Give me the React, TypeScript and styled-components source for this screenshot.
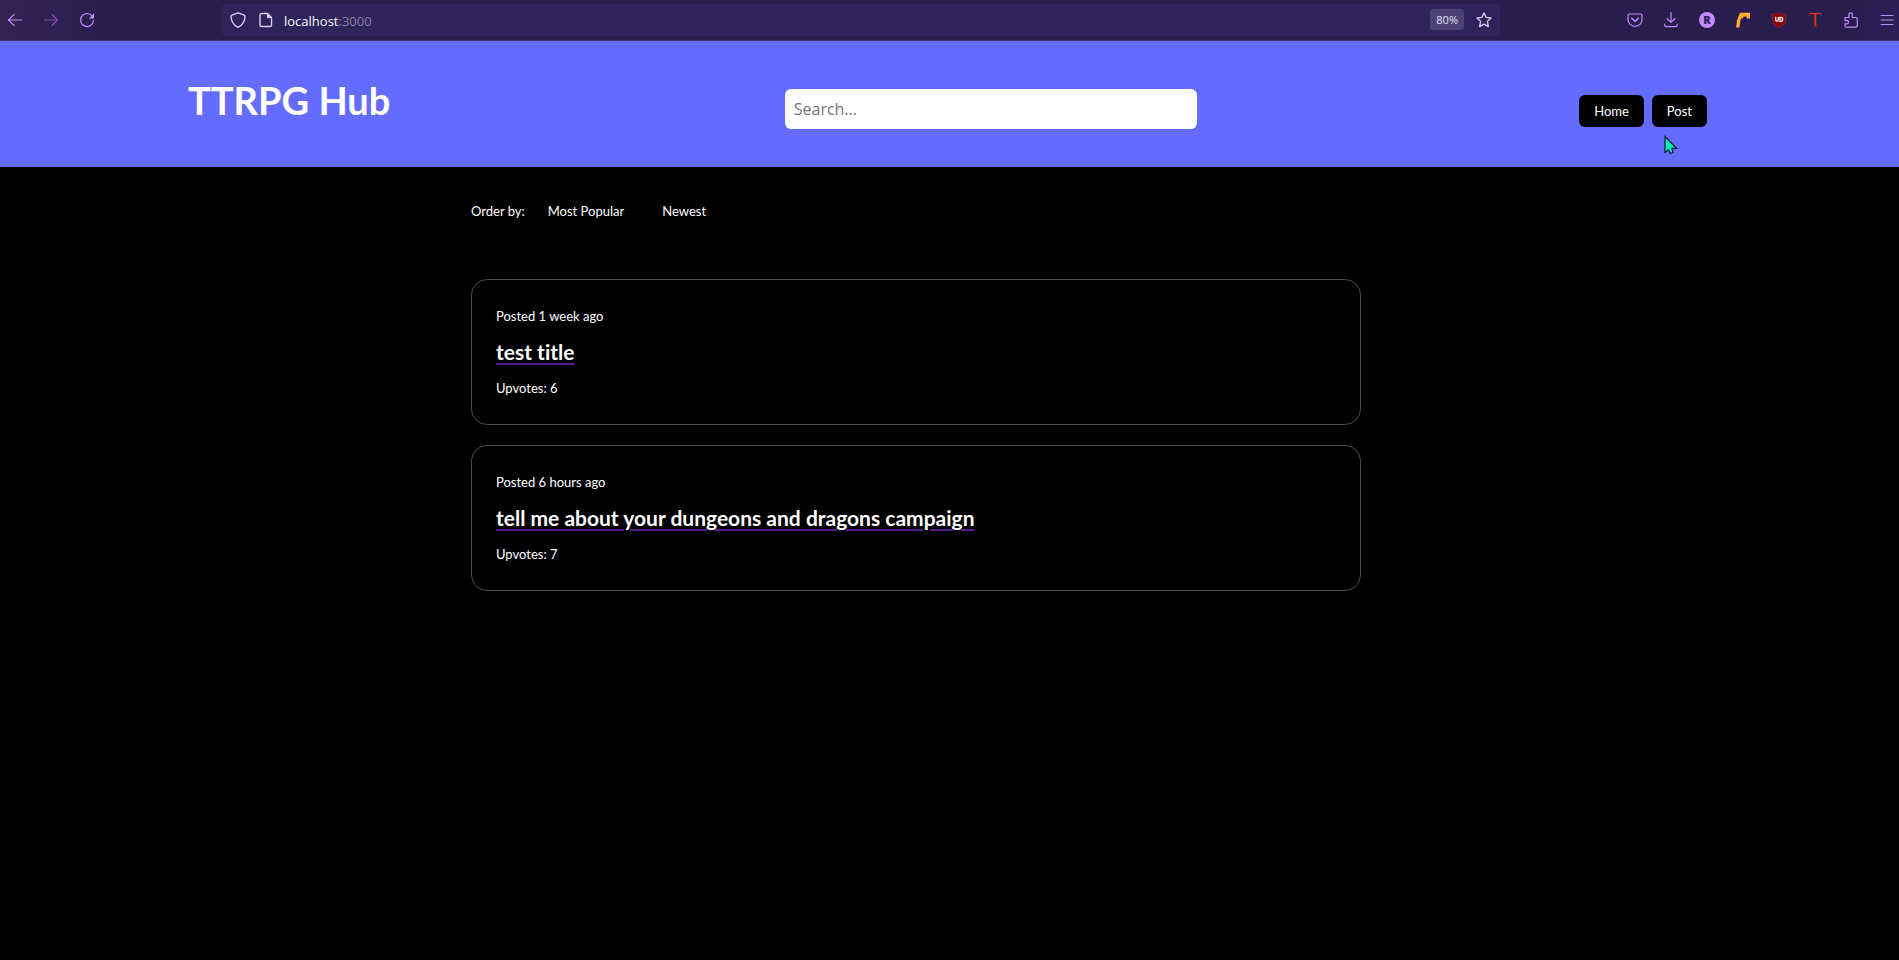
import React from 'react';
import styled, { createGlobalStyle } from 'styled-components';

const GlobalStyle = createGlobalStyle`
  *, *::before, *::after { box-sizing: border-box; }
  body {
    margin: 0;
    min-height: 100vh;
    background: #000;
    color: #fff;
    font-family: 'Century Gothic', Lato, sans-serif;
    font-size: 13px;
    line-height: 16px;
    font-variant-ligatures: none;
  }
  h1, h2, p { margin: 0; }
  button { font: inherit; border: 0; padding: 0; background: none; color: inherit; cursor: pointer; }
`;

/* ---------- browser bar ---------- */

const BrowserBar = styled.div`
  display: flex;
  align-items: center;
  height: 41px;
  padding: 0 0 1px 3px;
  background: linear-gradient(100deg, #33204f 0, #2d2052 60px, #291d4e 110px, #281d4d 96%, #2c1e52 100%);
  border-bottom: 1px solid #43366b;
  font-family: 'Segoe UI', 'Open Sans', sans-serif;
`;

const ToolGroup = styled.div`
  display: flex;
  gap: 12px;
`;

const ToolButton = styled.button<{ $dim?: boolean }>`
  display: flex;
  align-items: center;
  justify-content: center;
  width: 24px;
  height: 32px;
  color: #c689ff;
  opacity: ${({ $dim }) => ($dim ? 0.5 : 1)};
`;

const AddressBar = styled.div`
  display: flex;
  flex: 1;
  align-items: center;
  height: 32px;
  margin: 0 123px;
  padding: 0 8px;
  border-radius: 4px;
  background: #2e245a;
  color: #d9cdf0;
`;

const Address = styled.div`
  flex: 1;
  margin-left: 10px;
  padding-top: 2px;
  font-size: 13px;
  color: #fbfbfe;
`;

const Port = styled.span`
  color: #8a80a8;
`;

const PageIcon = styled.span`
  display: flex;
  margin-left: 12px;
`;

const ZoomBadge = styled.button`
  height: 21px;
  padding: 0 6px;
  margin-right: 12px;
  border-radius: 3px;
  background: #4c4275;
  color: #e6e0f5;
  font-size: 11px;
`;

const IconButton = styled.button`
  display: flex;
`;

const Svg = ({ children }: { children: React.ReactNode }) => (
  <svg
    width="16"
    height="16"
    viewBox="0 0 16 16"
    fill="none"
    stroke="currentColor"
    strokeWidth="1.2"
    strokeLinecap="round"
    strokeLinejoin="round"
    aria-hidden="true"
  >
    {children}
  </svg>
);

const BackIcon = () => <Svg><path d="M14.5 8H1.500M7 2.500L1.500 8L7 13.500" /></Svg>;
const ForwardIcon = () => <Svg><path d="M1.500 8H14.500M9 2.500L14.500 8L9 13.500" /></Svg>;
const ReloadIcon = () => (
  <Svg>
    <path d="M12.800 3.600A6.500 6.500 0 1 0 14.500 8.600" />
    <path d="M15 1.200V6.400H9.800Z" fill="currentColor" stroke="none" />
  </Svg>
);
const ShieldIcon = () => (
  <Svg><path d="M8 .8L14.200 3.200C14.800 3.400 15 3.800 15 4.300C14.800 9.600 12.500 13.300 8 15.300C3.500 13.300 1.200 9.600 1 4.300C1 3.800 1.200 3.400 1.800 3.200Z" strokeWidth="1.4" /></Svg>
);
const DocumentIcon = () => (
  <Svg>
    <path d="M3.500 1.500H9.500L13.500 5.500V13A1.500 1.500 0 0 1 12 14.500H3.500A1.500 1.500 0 0 1 2 13V3A1.500 1.500 0 0 1 3.500 1.500Z" strokeWidth="1.4" />
    <path d="M9 1.200V6H13.800Z" fill="currentColor" stroke="none" />
  </Svg>
);
const StarIcon = () => (
  <Svg><path d="M8 1L10.100 5.400L15 6L11.400 9.400L12.300 14.600L8 12.100L3.700 14.600L4.600 9.400L1 6L5.900 5.400Z" strokeWidth="1.3" /></Svg>
);
const PocketIcon = () => (
  <Svg>
    <path d="M2.700 2H13.300A1.700 1.700 0 0 1 15 3.700V7.500A7 6.800 0 0 1 1 7.500V3.700A1.700 1.700 0 0 1 2.700 2Z" />
    <path d="M4.700 6.300L8 9.400L11.300 6.300" strokeWidth="1.5" />
  </Svg>
);
const DownloadIcon = () => (
  <Svg><path d="M8 .7V10.300M4 6.500L8 10.400L12 6.500M1.700 12V13A1.800 1.800 0 0 0 3.500 14.700H12.500A1.800 1.800 0 0 0 14.300 13V12" /></Svg>
);
const LetterIcon = () => (
  <Svg>
    <circle cx="8" cy="8" r="8" fill="currentColor" stroke="none" />
    <text x="8" y="12" textAnchor="middle" fontSize="11" fontWeight="800" fontFamily="Open Sans, sans-serif" fill="#2c1e50" stroke="none">R</text>
  </Svg>
);
const HookIcon = () => (
  <Svg>
    <path d="M1 15.500L2 8.500L3.300 5L5 .8H15V6.500H11.800V4.500H8.700L7.500 6.500H6L5.200 9.500L4.500 15.500Z" fill="#ffac33" stroke="none" />
  </Svg>
);
const BlockerIcon = () => (
  <Svg>
    <path d="M8 .5C10 2 12.500 2.200 14.700 2.200V8C14.700 11.500 11.500 14 8 15.500C4.500 14 1.300 11.500 1.300 8V2.200C3.500 2.200 6 2 8 .5Z" fill="#8a0000" stroke="#8a2a45" strokeWidth=".8" />
    <path d="M4.700 5.500V7.800Q4.700 9.300 6 9.300Q7.300 9.300 7.300 7.800V5.500M9 5.400V9.300H9.700Q11.700 9.200 11.700 7.400Q11.700 5.500 9.700 5.400Z" stroke="#fff" strokeWidth="1.300" />
  </Svg>
);
const SerifTIcon = () => (
  <Svg>
    <path d="M1.800 3.800L2.500 1.300H14L14.500 3.800M8.300 1.500V14.500" stroke="#7d2329" strokeLinecap="butt" />
    <path d="M2.800 1.600H13.500" stroke="#d9351f" strokeLinecap="butt" />
    <path d="M8.300 2V14.500" stroke="#d0371f" strokeWidth="2" strokeLinecap="butt" />
    <path d="M6 14.800H10.500" stroke="#7d2329" strokeWidth="1" />
  </Svg>
);
const PuzzleIcon = () => (
  <Svg>
    <path d="M2 5.500H5.900V2.600A1.700 1.700 0 0 1 9.300 2.600V5.500H13A1.200 1.200 0 0 1 14.200 6.700V14A1.200 1.200 0 0 1 13 15.200H3.200A1.200 1.200 0 0 1 2 14V11.800H4A1.500 1.500 0 0 0 4 8.700H2Z" />
  </Svg>
);
const MenuIcon = () => <Svg><path d="M2 3.500H14M2 8H14M2 12.500H14" /></Svg>;

/* ---------- site header ---------- */

const Header = styled.header`
  display: flex;
  align-items: center;
  justify-content: space-between;
  height: 126px;
  padding: 0 192px 0 188px;
  background: #646cff;
`;

const SiteTitle = styled.h1`
  padding: 0 12px 8px 0;
  font-size: 38px;
  line-height: 48px;
  font-weight: 700;
`;

const SearchBox = styled.input`
  width: 412px;
  height: 40px;
  margin-top: 10px;
  padding: 0 9px;
  border: 0;
  border-radius: 6px;
  background: #fff;
  color: #222;
  font: 16px 'Segoe UI', 'Open Sans', sans-serif;
  &::placeholder { color: #757575; opacity: 1; }
`;

const Nav = styled.nav`
  display: flex;
  gap: 8px;
  margin-top: 14px;
`;

const NavButton = styled.button`
  height: 32px;
  padding: 0 15px;
  border-radius: 6px;
  background: #000;
`;

const Pointer = styled.svg`
  position: absolute;
  top: 135px;
  right: 221px;
`;

/* ---------- feed ---------- */

const Feed = styled.main`
  display: grid;
  grid-template-columns: minmax(0, 471fr) minmax(0, 890fr) minmax(0, 538fr);
  padding: 36px 0;
  & > * { grid-column: 2; }
`;

const OrderRow = styled.div`
  display: flex;
  align-items: center;
  height: 16px;
  margin-bottom: 60px;
`;

const OrderButton = styled.button`
  margin-left: 23px;
  & + & { margin-left: 38px; }
`;

const PostList = styled.div`
  display: grid;
  gap: 20px;
`;

const PostCard = styled.article`
  height: 146px;
  padding: 28px 24px;
  border: 1px solid #4d4d4d;
  border-radius: 16px;
`;

const PostLink = styled.a`
  display: block;
  margin: 8px 0;
  color: #551a8b;
  font-size: 21px;
  line-height: 40px;
  text-decoration: underline 2px;
  text-underline-offset: 3px;
`;

const PostTitle = styled.span`
  color: #fff;
  font-weight: 700;
`;

const posts = [
  { id: 1, age: '1 week ago', title: 'test title', upvotes: 6 },
  { id: 2, age: '6 hours ago', title: 'tell me about your dungeons and dragons campaign', upvotes: 7 },
];

export default function App() {
  return (
    <>
      <GlobalStyle />
      <BrowserBar>
        <ToolGroup>
          <ToolButton aria-label="Back"><BackIcon /></ToolButton>
          <ToolButton aria-label="Forward" $dim><ForwardIcon /></ToolButton>
          <ToolButton aria-label="Reload"><ReloadIcon /></ToolButton>
        </ToolGroup>
        <AddressBar>
          <IconButton aria-label="Tracking protection"><ShieldIcon /></IconButton>
          <PageIcon><DocumentIcon /></PageIcon>
          <Address>localhost<Port>:3000</Port></Address>
          <ZoomBadge>80%</ZoomBadge>
          <IconButton aria-label="Bookmark"><StarIcon /></IconButton>
        </AddressBar>
        <ToolGroup>
          <ToolButton aria-label="Pocket"><PocketIcon /></ToolButton>
          <ToolButton aria-label="Downloads"><DownloadIcon /></ToolButton>
          <ToolButton aria-label="Account"><LetterIcon /></ToolButton>
          <ToolButton aria-label="Hook"><HookIcon /></ToolButton>
          <ToolButton aria-label="Blocker"><BlockerIcon /></ToolButton>
          <ToolButton aria-label="Text tool"><SerifTIcon /></ToolButton>
          <ToolButton aria-label="Extensions"><PuzzleIcon /></ToolButton>
          <ToolButton aria-label="Menu"><MenuIcon /></ToolButton>
        </ToolGroup>
      </BrowserBar>

      <Header>
        <SiteTitle>TTRPG Hub</SiteTitle>
        <SearchBox type="search" placeholder="Search..." aria-label="Search" />
        <Nav>
          <NavButton>Home</NavButton>
          <NavButton>Post</NavButton>
        </Nav>
      </Header>

      <Feed>
        <OrderRow>
          <span>Order by:</span>
          <OrderButton>Most Popular</OrderButton>
          <OrderButton>Newest</OrderButton>
        </OrderRow>
        <PostList>
          {posts.map((post) => (
            <PostCard key={post.id}>
              <p>Posted {post.age}</p>
              <PostLink href={`#post-${post.id}`}><PostTitle>{post.title}</PostTitle></PostLink>
              <p>Upvotes: {post.upvotes}</p>
            </PostCard>
          ))}
        </PostList>
      </Feed>

      <Pointer width="14" height="20" viewBox="0 0 14 20" aria-hidden="true">
        <path d="M1 1.500V17.500L4.500 14.800L6.500 18.500L9 17.500L7.800 13.300H12.500Z" fill="#00f5b4" stroke="#111133" strokeWidth="1.200" />
      </Pointer>
    </>
  );
}
